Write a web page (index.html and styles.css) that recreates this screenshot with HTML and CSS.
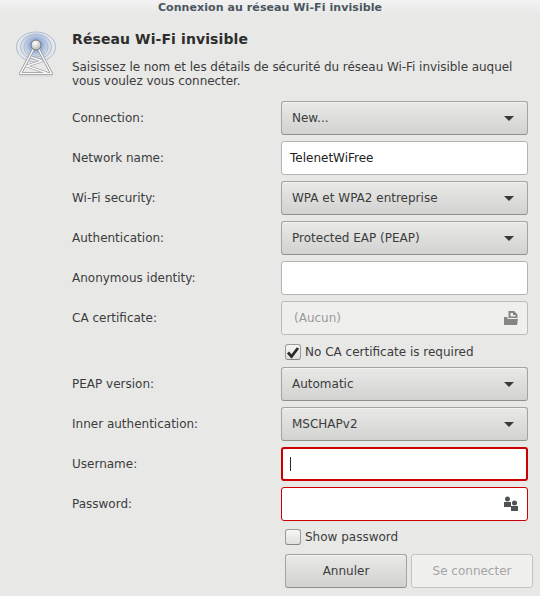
FILE: index.html
```html
<!DOCTYPE html>
<html lang="fr">
<head>
<meta charset="utf-8">
<title>Connexion au réseau Wi-Fi invisible</title>
<link rel="stylesheet" href="styles.css">
</head>
<body>
<div class="window">
  <header class="titlebar">Connexion au réseau Wi-Fi invisible</header>
  <main class="content">
    <div class="icon-col">
      <svg class="tower" width="48" height="48" viewBox="0 0 48 48">
        <defs>
          <radialGradient id="glow" cx="24" cy="15" r="17" gradientUnits="userSpaceOnUse">
            <stop offset="0" stop-color="#3a6cc0" stop-opacity=".95"/>
            <stop offset=".5" stop-color="#86a6da" stop-opacity=".6"/>
            <stop offset="1" stop-color="#c2d0e6" stop-opacity=".05"/>
          </radialGradient>
          <radialGradient id="ball" cx="23" cy="13" r="6" gradientUnits="userSpaceOnUse">
            <stop offset="0" stop-color="#ffffff"/>
            <stop offset="1" stop-color="#c4c4c4"/>
          </radialGradient>
          <linearGradient id="shade" x1="0" y1="0" x2="0" y2="1">
            <stop offset="0" stop-color="#d0d0d0"/>
            <stop offset="1" stop-color="#e8e8e7"/>
          </linearGradient>
        </defs>
        <ellipse cx="24" cy="17" rx="17" ry="14" fill="url(#glow)"/>
        <g fill="none" stroke="#a9bbd7" stroke-width="1">
          <ellipse cx="24" cy="17" rx="19.500" ry="15"/>
          <ellipse cx="24" cy="17" rx="15.500" ry="12.500"/>
          <ellipse cx="24" cy="17" rx="12" ry="10"/>
        </g>
        <rect x="7" y="44" width="34" height="4" fill="url(#shade)"/>
        <g fill="none" stroke="#949494" stroke-width="2.800" stroke-linejoin="round">
          <path d="M21.500 19 8.500 43.500H39.500L26.500 19"/>
          <path d="M19 27 30 31 14.500 36 35 43"/>
        </g>
        <g fill="none" stroke="#f6f6f6" stroke-width="1.600" stroke-linejoin="round">
          <path d="M21.500 19 8.500 43.500H39.500L26.500 19"/>
          <path d="M19 27 30 31 14.500 36 35 43"/>
        </g>
        <circle cx="24" cy="15" r="5" fill="url(#ball)" stroke="#777"/>
      </svg>
    </div>
    <div class="main-col">
      <h1 class="heading">Réseau Wi-Fi invisible</h1>
      <p class="intro">Saisissez le nom et les détails de sécurité du réseau Wi-Fi invisible auquel vous voulez vous connecter.</p>
      <div class="form">
        <div class="row"><span class="label">Connection:</span><div class="combo"><span>New...</span><i class="arrow"></i></div></div>
        <div class="row"><span class="label">Network name:</span><div class="entry">TelenetWiFree</div></div>
        <div class="row"><span class="label">Wi-Fi security:</span><div class="combo"><span>WPA et WPA2 entreprise</span><i class="arrow"></i></div></div>
        <div class="row"><span class="label">Authentication:</span><div class="combo"><span>Protected EAP (PEAP)</span><i class="arrow"></i></div></div>
        <div class="row"><span class="label">Anonymous identity:</span><div class="entry"></div></div>
        <div class="row"><span class="label">CA certificate:</span>
          <div class="file">
            <span>(Aucun)</span>
            <svg width="16" height="16" viewBox="0 0 16 16"><path fill="#858585" fill-rule="evenodd" d="M5.500 1H11l3.500 3.500V8H5.500zM7.500 3v3.500h5V5H10V3z"/><path fill="#858585" d="M1 7h3.500v2H15l-1 6H1z"/></svg>
          </div>
        </div>
        <div class="check-row first-check"><span class="check on"><svg width="14" height="14" viewBox="0 0 14 14"><path d="M2 7.500 5.500 11.500 12 3" fill="none" stroke="#2b2b2b" stroke-width="2.800"/></svg></span><span>No CA certificate is required</span></div>
        <div class="row"><span class="label">PEAP version:</span><div class="combo"><span>Automatic</span><i class="arrow"></i></div></div>
        <div class="row"><span class="label">Inner authentication:</span><div class="combo"><span>MSCHAPv2</span><i class="arrow"></i></div></div>
        <div class="row"><span class="label">Username:</span><div class="entry error focus"><i class="caret"></i></div></div>
        <div class="row"><span class="label">Password:</span>
          <div class="entry error icon-entry">
            <svg width="16" height="16" viewBox="0 0 16 16"><g fill="#4d5254"><circle cx="4.500" cy="3" r="2.500"/><path d="M1 6h7v5H1z"/><circle cx="11.500" cy="7" r="2.500"/><path d="M8 10h7v5H8z"/></g></svg>
          </div>
        </div>
        <div class="check-row second-check"><span class="check"></span><span>Show password</span></div>
      </div>
      <div class="actions">
        <button class="btn" type="button">Annuler</button>
        <button class="btn disabled" type="button">Se connecter</button>
      </div>
    </div>
  </main>
</div>
</body>
</html>
```
FILE: styles.css
```css
* { box-sizing: border-box; }
html, body { margin: 0; padding: 0; }
body {
  width: 540px;
  height: 596px;
  overflow: hidden;
  background: #e8e8e7;
  font-family: "DejaVu Sans", sans-serif;
  font-size: 12px;
  color: #3c3c3c;
}
.window { width: 540px; height: 596px; display: flex; flex-direction: column; }
.titlebar {
  height: 15px;
  line-height: 15px;
  text-align: center;
  font-size: 11px;
  font-weight: bold;
  letter-spacing: .08px;
  color: #4a5660;
  background: linear-gradient(#f2f2f2, #e8e8e7);
  white-space: nowrap;
}
.content { display: flex; flex: 1; padding: 0 7px 0 16px; }
.icon-col { width: 56px; flex: none; padding-top: 15px; }
.tower { display: block; margin-left: -4px; }
.main-col { flex: 1; min-width: 0; }
.heading {
  margin: 15px 0 0;
  font-size: 14px;
  line-height: 18px;
  font-weight: bold;
  letter-spacing: .1px;
  color: #2d2d2d;
}
.intro {
  margin: 12px 0 0;
  width: 450px;
  line-height: 14px;
  font-size: 12px;
  letter-spacing: -.05px;
  color: #3c3c3c;
}
.form { margin-top: 13px; display: flex; flex-direction: column; gap: 6px; }
.row { display: flex; align-items: center; height: 34px; }
.label { width: 209px; flex: none; }
.combo, .entry, .file {
  width: 247px;
  height: 34px;
  border-radius: 3px;
  display: flex;
  align-items: center;
}
.combo {
  border: 1px solid #a3a3a0;
  border-bottom-color: #8f8f8c;
  background: linear-gradient(#e9e9e8, #d2d2d0);
  padding: 0 13px 0 10px;
  justify-content: space-between;
  box-shadow: inset 0 1px 0 #f3f3f3;
}
.arrow {
  width: 0;
  height: 0;
  border-left: 5px solid transparent;
  border-right: 5px solid transparent;
  border-top: 5px solid #3a3a3a;
}
.entry {
  background: #fff;
  border: 1px solid #b4b4b2;
  padding: 0 8px;
  color: #222;
}
.entry.error { border-color: #cc0000; }
.entry.focus { border-width: 2px; padding-left: 7px; }
.caret { width: 1px; height: 14px; background: #2b2b2b; }
.icon-entry { justify-content: flex-end; }
.file {
  background: #efefee;
  border: 1px solid #bcbcba;
  padding: 0 8px 0 12px;
  justify-content: space-between;
  color: #9a9a9a;
}
.check-row {
  display: flex;
  align-items: center;
  height: 17px;
  margin-left: 213px;
  gap: 4px;
}
.first-check { margin-top: 2px; margin-bottom: 1px; }
.second-check { margin-top: 1px; }
.check {
  width: 16px;
  height: 16px;
  flex: none;
  border: 1px solid #9a9a97;
  border-bottom-color: #858582;
  border-radius: 3px;
  background: linear-gradient(#f6f6f5, #e0e0de);
  display: flex;
  align-items: center;
  justify-content: center;
}
.actions { display: flex; gap: 4px; margin: 9px 0 0 213px; }
.btn {
  width: 122px;
  height: 34px;
  border: 1px solid #a3a3a0;
  border-bottom-color: #8f8f8c;
  border-radius: 3px;
  background: linear-gradient(#e9e9e8, #d2d2d0);
  box-shadow: inset 0 1px 0 #f3f3f3;
  font-family: "DejaVu Sans", sans-serif;
  font-size: 12px;
  color: #3c3c3c;
  padding: 0;
}
.btn.disabled {
  background: #f0f0ef;
  border-color: #c4c4c2;
  box-shadow: none;
  color: #a5a5a5;
}
```
